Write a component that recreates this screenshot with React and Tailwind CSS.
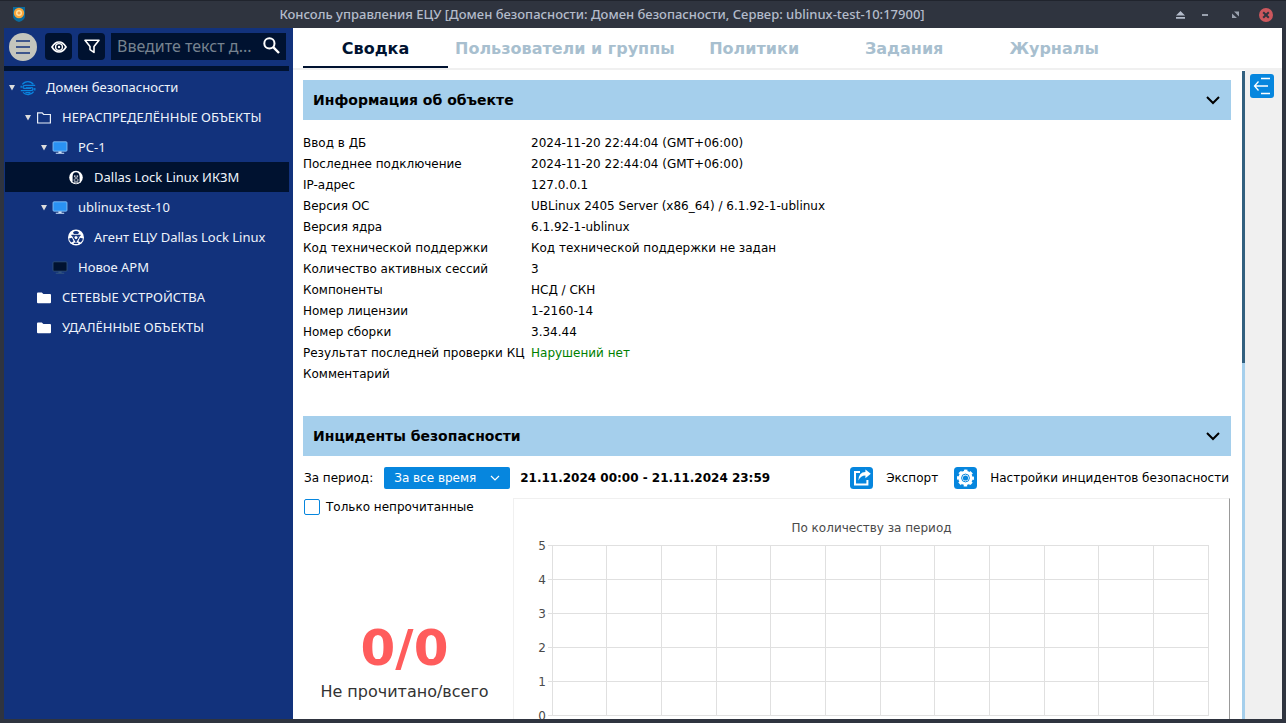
import React, { useState } from 'react'

const objectInfo = [
  ['Ввод в ДБ', '2024-11-20 22:44:04 (GMT+06:00)'],
  ['Последнее подключение', '2024-11-20 22:44:04 (GMT+06:00)'],
  ['IP-адрес', '127.0.0.1'],
  ['Версия ОС', 'UBLinux 2405 Server (x86_64) / 6.1.92-1-ublinux'],
  ['Версия ядра', '6.1.92-1-ublinux'],
  ['Код технической поддержки', 'Код технической поддержки не задан'],
  ['Количество активных сессий', '3'],
  ['Компоненты', 'НСД / СКН'],
  ['Номер лицензии', '1-2160-14'],
  ['Номер сборки', '3.34.44'],
  ['Результат последней проверки КЦ', 'Нарушений нет', 'text-[#008000]'],
  ['Комментарий', ''],
]

const tabs = ['Сводка', 'Пользователи и группы', 'Политики', 'Задания', 'Журналы']

const tree = [
  { label: 'Домен безопасности', icon: DomainIcon, pad: 'pl-1', open: true },
  { label: 'НЕРАСПРЕДЕЛЁННЫЕ ОБЪЕКТЫ', icon: FolderOutlineIcon, pad: 'pl-5', open: true },
  { label: 'PC-1', icon: MonitorIcon, pad: 'pl-9', open: true },
  { label: 'Dallas Lock Linux ИКЗМ', icon: LinuxIcon, pad: 'pl-[52px]' },
  { label: 'ublinux-test-10', icon: MonitorIcon, pad: 'pl-9', open: true },
  { label: 'Агент ЕЦУ Dallas Lock Linux', icon: AgentIcon, pad: 'pl-[52px]' },
  { label: 'Новое АРМ', icon: MonitorOffIcon, pad: 'pl-9' },
  { label: 'СЕТЕВЫЕ УСТРОЙСТВА', icon: FolderIcon, pad: 'pl-5' },
  { label: 'УДАЛЁННЫЕ ОБЪЕКТЫ', icon: FolderIcon, pad: 'pl-5' },
]

function DomainIcon() {
  return (
    <svg width="16" height="16" viewBox="0 0 16 16" fill="none" stroke="#0a84de" strokeWidth="1.3">
      <path d="M2.4 4.4A6.6 6.2 0 0 1 13.4 4.4" />
      <path d="M15.2 5.4H5.4Q3 5.4 3 7t2.4 1.4H11" />
      <path d="M.8 10.6h9.8Q13 10.6 13 9t-2.4-1.2H6" />
      <path d="M13.6 11.6A6.6 6.2 0 0 1 3 12.4M1.2 7.8v-2M14.8 8v2.4M5.4 12.6h5" />
    </svg>
  )
}

function FolderOutlineIcon() {
  return (
    <svg width="16" height="16" viewBox="0 0 16 16" fill="none" stroke="#e8edf7" strokeWidth="1.2">
      <path d="M1.6 13V2.8h4.6l1.4 1.7h6.8V13z" />
    </svg>
  )
}

function FolderIcon() {
  return (
    <svg width="16" height="16" viewBox="0 0 16 16" fill="#fff">
      <path d="M1 3.4Q1 2.4 2 2.4h3.8l1.6 1.5H14q1 0 1 1v7.3q0 1-1 1H2q-1 0-1-1z" />
    </svg>
  )
}

function MonitorIcon() {
  return (
    <svg width="16" height="16" viewBox="0 0 16 16">
      <rect x="1" y="1.8" width="14" height="9.4" rx="1" fill="#2a92f2" stroke="#8fc6f8" strokeWidth=".8" />
      <path d="M6.4 11.6h3.2v1.2h2.6v.9H3.8v-.9h2.6z" fill="#cfe4fa" />
    </svg>
  )
}

function MonitorOffIcon() {
  return (
    <svg width="16" height="16" viewBox="0 0 16 16">
      <rect x="1" y="1.8" width="14" height="9.4" rx="1" fill="#001230" stroke="#33557f" strokeWidth=".8" />
      <path d="M6.4 11.6h3.2v1.2h2.6v.9H3.8v-.9h2.6z" fill="#33557f" />
    </svg>
  )
}

function LinuxIcon() {
  return (
    <svg width="16" height="16" viewBox="0 0 16 16">
      <circle cx="8" cy="7.5" r="6.8" fill="#fff" />
      <path d="M4.6 12V6.4Q4.8 2.2 8 2.2t3.6 4.2V12L8 13.4z" fill="#001230" />
      <path d="M6 5.4h1.5v1.3H6zM8.6 5.4h1.5v1.3H8.6zM6.6 7.6h3v1h-3zM5.6 9.6h1.8v1H5.6zM8.8 9.6h1.8v1H8.8zM6 11.4h4.2v1H6z" fill="#fff" />
    </svg>
  )
}

function AgentIcon() {
  return (
    <svg className="shrink-0" width="18" height="18" viewBox="0 0 18 18">
      <circle cx="9" cy="8.5" r="8" fill="#fff" />
      <path d="M6 3.2Q9 .8 12 3.2L11.2 5H6.8zM2 9.4l3-.6 1.6 3.4-2 1.4Q2.4 12.2 2 9.4zM16 9.4l-3-.6-1.6 3.4 2 1.4q2.2-1.4 2.6-4.2z" fill="#12327c" />
      <path d="M4.4 6.4h9.2M5.6 6.6L9 12.8l3.4-6.2M6.8 14.4h4.4" fill="none" stroke="#12327c" strokeWidth="1.2" />
      <circle cx="9" cy="8.6" r="2" fill="#fff" stroke="#12327c" />
    </svg>
  )
}

function TitleBar() {
  return (
    <header className="relative flex h-7 shrink-0 items-center justify-end border-t border-[#20242d] bg-[#2f343f] px-2">
      <svg className="mr-auto" width="20" height="20" viewBox="0 0 20 20">
        <path d="M5 2h12v9q0 4-6 6-6-2-6-6z" fill="#0b6c9e" />
        <circle cx="11" cy="8" r="5.2" fill="#f6a43a" />
        <circle cx="11" cy="8" r="3" fill="#ffe2a0" />
        <path d="M9.4 8h3.2M11 6.4v3.2" stroke="#f08a24" />
      </svg>
      <h1 className="pointer-events-none absolute inset-x-0 pr-[82px] text-center font-['Noto_Sans'] text-[13px] font-medium text-[#b4bccb]">
        Консоль управления ЕЦУ [Домен безопасности: Домен безопасности, Сервер: ublinux-test-10:17900]
      </h1>
      <div className="flex items-center">
        <button aria-label="Закрепить" className="mr-[17px]">
          <svg width="9" height="9" viewBox="0 0 9 9" fill="#b4bccb"><path d="M4.5 1L9 5.6H0zM0 7h9v1.8H0z" /></svg>
        </button>
        <button aria-label="Свернуть" className="mr-6">
          <svg width="6" height="9" viewBox="0 0 6 9" fill="#9aa1ae"><path d="M0 4h6v2H0z" /></svg>
        </button>
        <button aria-label="Развернуть" className="mr-5">
          <svg width="7" height="9" viewBox="0 0 7 9" fill="#9aa1ae"><path d="M2 1.5h5v5L5.4 4.9 3.6 3.1zM0 3.4l5 4.6H0z" /></svg>
        </button>
        <button aria-label="Закрыть" className="mr-[5px]">
          <svg width="14" height="14" viewBox="0 0 14 14">
            <circle cx="7" cy="7" r="7" fill="#cc575d" />
            <path d="M4.2 4.2l5.6 5.6M9.8 4.2L4.2 9.8" stroke="#2f343f" strokeWidth="2" />
          </svg>
        </button>
      </div>
    </header>
  )
}

function Sidebar() {
  const [selected, setSelected] = useState(3)
  return (
    <aside className="flex w-[289px] shrink-0 flex-col bg-[#12327c]">
      <div className="flex h-[38px] shrink-0 items-start pt-[5px] pl-[5px] pr-[7px]">
        <button aria-label="Меню" className="mr-2 flex size-7 items-center justify-center rounded-full bg-[#c4c5bd]">
          <svg width="14" height="14" viewBox="0 0 14 14" stroke="#12327c" strokeWidth="1.6"><path d="M0 1h14M0 7h14M0 13h14" /></svg>
        </button>
        <button aria-label="Показать" className="mr-1.5 flex size-[27px] items-center justify-center rounded bg-[#001230]">
          <svg width="16" height="12" viewBox="0 0 16 12" fill="none" stroke="#fff">
            <path d="M1 6Q4 1 8 1t7 5q-3 5-7 5T1 6z" strokeWidth="1.7" />
            <circle cx="8" cy="6" r="3.4" strokeWidth="1.4" />
            <circle cx="8" cy="6" r="1.2" fill="#fff" stroke="none" />
          </svg>
        </button>
        <button aria-label="Фильтр" className="mr-1.5 flex size-[27px] items-center justify-center rounded bg-[#001230]">
          <svg width="16" height="15" viewBox="0 0 16 15" fill="none" stroke="#fff" strokeWidth="1.6" strokeLinejoin="round">
            <path d="M1 1.3h14L10 7.4v6L6 10.6V7.4z" />
          </svg>
        </button>
        <div className="flex h-[27px] min-w-0 flex-1 items-center bg-[#001230] px-1.5 pb-0.5">
          <input
            aria-label="Поиск"
            placeholder="Введите текст д..."
            className="min-w-0 flex-1 bg-transparent font-['Noto_Sans'] text-[16px] text-white outline-none placeholder:text-[#76828f]"
          />
          <button aria-label="Найти">
            <svg width="17" height="17" viewBox="0 0 17 17" fill="none" stroke="#fff"><circle cx="6.4" cy="6.4" r="5.1" strokeWidth="2" /><path d="M10.2 10.2l5.8 5.8" strokeWidth="2.4" /></svg>
          </button>
        </div>
      </div>
      <div className="mr-1 h-[5px] shrink-0 bg-[#001230]" />
      <nav className="mr-1 mt-px flex flex-col pl-px">
        {tree.map((item, i) => (
          <button
            key={item.label}
            onClick={() => setSelected(i)}
            className={`flex h-[30px] items-center pt-0.5 text-left font-['Noto_Sans'] text-[13px] text-[#eef2fa] ${item.pad} ${selected === i ? 'bg-[#001230]' : ''}`}
          >
            <svg width="6" height="6" viewBox="0 0 6 6" className="mr-[5px] shrink-0" fill={item.open ? '#dcdcdc' : 'none'}>
              <path d="M0 0h6L3 5.5z" />
            </svg>
            <span className="mr-2.5 flex w-4 shrink-0 justify-center"><item.icon /></span>
            <span className="whitespace-nowrap">{item.label}</span>
          </button>
        ))}
      </nav>
    </aside>
  )
}

function SectionHeader({ title }) {
  return (
    <button className="flex h-10 w-full items-center justify-between bg-[#a5cfec] px-2.5 text-left text-[14px] font-bold">
      <span>{title}</span>
      <svg width="16" height="10" viewBox="0 0 16 10" fill="none" stroke="#000" strokeWidth="2"><path d="M2 2l6 6 6-6" /></svg>
    </button>
  )
}

function IncidentChart() {
  const columns = Array.from({ length: 13 }, (_, i) => `${(i * 100) / 12}%`)
  return (
    <div className="h-60 flex-1 border-t border-r border-l border-[#f0f0f0] border-r-[#999]">
      <p className="mt-[21px] text-center text-[12px] leading-4 text-[#4a4a4a]">По количеству за период</p>
      <div className="mt-[9px] pr-[21px] pl-[38px]">
        <svg className="block w-full overflow-visible" height="171" shapeRendering="crispEdges">
          {columns.map(x => <line key={x} x1={x} x2={x} y1="0" y2="171" stroke="#e0e0e0" />)}
          {[5, 4, 3, 2, 1, 0].map((n, i) => (
            <g key={n}>
              <line x1="-4" x2="100%" y1={i * 34 + 0.5} y2={i * 34 + 0.5} stroke="#e0e0e0" />
              <text x="-6" y={i * 34 + 5} textAnchor="end" fontSize="12" fill="#4a4a4a">{n}</text>
            </g>
          ))}
        </svg>
      </div>
    </div>
  )
}

function Incidents() {
  const [unreadOnly, setUnreadOnly] = useState(false)
  return (
    <section>
      <SectionHeader title="Инциденты безопасности" />
      <div className="mt-[11px] flex items-center pr-0.5 pl-px whitespace-nowrap">
        <label htmlFor="period" className="mr-[11px]">За период:</label>
        <div className="relative">
          <select id="period" className="block h-[22px] w-[126px] appearance-none rounded-xs bg-[#0686de] pl-2.5 text-[12px] text-white">
            <option>За все время</option>
            <option>За день</option>
          </select>
          <svg className="pointer-events-none absolute top-2 right-2.5" width="10" height="6" viewBox="0 0 10 6" fill="none" stroke="#fff" strokeWidth="1.2"><path d="M1 1l4 4 4-4" /></svg>
        </div>
        <span className="mr-auto ml-2.5 font-bold">21.11.2024 00:00 - 21.11.2024 23:59</span>
        <button className="flex items-center gap-[13px]">
          <svg width="23" height="22" viewBox="0 0 23 22">
            <rect width="23" height="22" rx="3.5" fill="#0686de" />
            <path d="M10 5H5v12.4h12.4V13" fill="none" stroke="#fff" strokeWidth="2" />
            <path d="M15.4 2.6l5.4 4.2-5.4 4.4V8.6q-4.6 0-7 5 .2-8.4 7-8.6z" fill="#fff" />
          </svg>
          Экспорт
        </button>
        <button className="ml-4 flex items-center gap-[13px]">
          <svg width="23" height="22" viewBox="0 0 23 22">
            <rect width="23" height="22" rx="3.5" fill="#0686de" />
            <circle cx="11.5" cy="11" r="7.2" fill="#fff" />
            <circle cx="11.5" cy="11" r="7.4" fill="none" stroke="#fff" strokeWidth="2.2" strokeDasharray="3.4 2.41" strokeDashoffset="1.7" />
            <circle cx="11.5" cy="11" r="3.9" fill="none" stroke="#0686de" strokeWidth="1" />
            <circle cx="11.5" cy="11" r="2.6" fill="#0686de" />
          </svg>
          Настройки инцидентов безопасности
        </button>
      </div>
      <div className="mt-[9px] flex pr-px">
        <div className="flex w-[210px] shrink-0 flex-col pl-px">
          <label className="flex items-center gap-1.5">
            <input
              type="checkbox"
              checked={unreadOnly}
              onChange={e => setUnreadOnly(e.target.checked)}
              className="size-4 appearance-none rounded-xs border border-[#0686de] bg-white checked:bg-[#0686de]"
            />
            Только непрочитанные
          </label>
          <div className="mt-[102px] mr-2 text-center">
            <div className="text-[50px] leading-[60px] font-bold text-[#ff5c5c]">0/0</div>
            <div className="text-[16px] leading-7 text-[#333]">Не прочитано/всего</div>
          </div>
        </div>
        <IncidentChart />
      </div>
    </section>
  )
}

export default function App() {
  const [tab, setTab] = useState(0)
  return (
    <div className="flex h-screen flex-col overflow-hidden bg-[#2f343f] font-['DejaVu_Sans',sans-serif] text-[12px] text-black">
      <TitleBar />
      <div className="mx-1 mb-1 flex min-h-0 flex-1 bg-white">
        <Sidebar />
        <div className="flex min-w-0 flex-1 flex-col">
          <div role="tablist" className="flex h-[42px] shrink-0 gap-[5px] border-b-2 border-[#f0f0f0] pl-2.5">
            {tabs.map((name, i) => (
              <button
                key={name}
                role="tab"
                aria-selected={tab === i}
                onClick={() => setTab(i)}
                className={`min-w-[145px] border-b-2 px-0.5 pt-[3px] text-[16px] font-bold whitespace-nowrap ${tab === i ? 'border-[#001230] text-[#001230]' : 'border-transparent text-[#a8bfcf]'}`}
              >
                {name}
              </button>
            ))}
          </div>
          <div className="flex min-h-0 flex-1">
            <main className="min-w-0 flex-1 overflow-hidden pt-2.5 pr-[11px] pl-2.5">
              <SectionHeader title="Информация об объекте" />
              <table className="mt-3 mb-8">
                <tbody>
                  {objectInfo.map(([name, value, color]) => (
                    <tr key={name} className="h-[21px]">
                      <th scope="row" className="w-[228px] text-left font-normal whitespace-nowrap">{name}</th>
                      <td className={color}>{value}</td>
                    </tr>
                  ))}
                </tbody>
              </table>
              <Incidents />
            </main>
            <div className="mt-px w-[3px] bg-[#a5cfec]"><div className="h-[45%] bg-[#32607f]" /></div>
            <div className="w-[37px] bg-[#f0f0f0] pt-1 pl-[5px]">
              <button aria-label="Развернуть панель" className="block">
                <svg width="24" height="24" viewBox="0 0 24 24" fill="none" stroke="#fff" strokeWidth="1.3">
                  <rect width="24" height="24" rx="3" fill="#0686de" stroke="none" />
                  <path d="M11 4.5h9M4.5 12H18M11 19.5h9M8.5 7.5L4.5 12l4 4.5" />
                </svg>
              </button>
            </div>
          </div>
        </div>
      </div>
    </div>
  )
}
